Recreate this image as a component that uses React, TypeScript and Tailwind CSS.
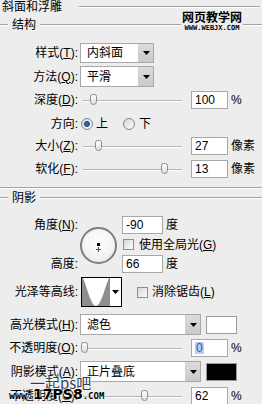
import type { ReactNode } from 'react'

const font = "font-['Liberation_Sans','Noto_Sans_CJK_SC',sans-serif]"

function Label({ children }: { children: ReactNode }) {
  return <div className="w-[78px] shrink-0 text-right whitespace-nowrap leading-[14px]">{children}</div>
}

function Arrow() {
  return (
    <svg width="7" height="4" viewBox="0 0 7 4">
      <path d="M0 0H7L3.5 4Z" fill="#000" />
    </svg>
  )
}

function Select({ value, width }: { value: string; width: string }) {
  return (
    <div className={`${width} h-full ml-[2px] flex bg-white border border-[#a8a8a8]`}>
      <div className="flex-1 pl-[6px] flex items-center whitespace-nowrap overflow-hidden">{value}</div>
      <div className="w-[15px] flex items-center justify-center bg-gradient-to-b from-[#dcdcdc] to-[#c9c9c9] border-l border-[#d0d0d0]">
        <Arrow />
      </div>
    </div>
  )
}

function Field({ value, width = 'w-[37px]', selected = false }: { value: string; width?: string; selected?: boolean }) {
  return (
    <div className={`${width} h-[18px] bg-white border border-[#a8a8a8] flex items-center pl-[3px] leading-none`}>
      {selected ? <span className="bg-[#b6cff3] text-[#2556b8] px-px">{value}</span> : value}
    </div>
  )
}

function Slider({ thumb }: { thumb: number }) {
  return (
    <div className="relative w-[104px] h-[18px] ml-[2px] shrink-0">
      <div className="absolute left-[3px] right-[2px] top-[9px] border-t border-[#b4b4b4] border-b border-b-white" />
      <div
        className="absolute top-[3px] w-[7px] h-[11px] rounded-t-[3px] rounded-b-[4px] border border-[#8c8c8c] bg-gradient-to-b from-white to-[#dedede]"
        style={{ left: thumb - 3.5 }}
      />
    </div>
  )
}

function SliderRow({ label, thumb, value, unit, mt, selected }: { label: ReactNode; thumb: number; value: string; unit: string; mt: string; selected?: boolean }) {
  return (
    <div className={`flex items-center h-[18px] ${mt}`}>
      <Label>{label}</Label>
      <Slider thumb={thumb} />
      <div className="ml-[7px]">
        <Field value={value} selected={selected} />
      </div>
      <span className="ml-[3px] whitespace-nowrap">{unit}</span>
    </div>
  )
}

function Etched({ className = '' }: { className?: string }) {
  return <div className={`h-0 border-t border-[#a2a2a2] border-b border-b-white ${className}`} />
}

function Radio({ on }: { on: boolean }) {
  return (
    <div className="w-[12px] h-[12px] rounded-full border border-[#7d8894] bg-gradient-to-br from-[#d4d4d4] to-white flex items-center justify-center">
      {on && <div className="w-[6px] h-[6px] rounded-full bg-[#2f6ab0] border border-[#1b3f70]" />}
    </div>
  )
}

function Check() {
  return <div className="w-[11px] h-[11px] border border-[#8e8e8e] bg-gradient-to-br from-[#d6d6d6] to-white shrink-0" />
}

export default function App() {
  return (
    <div className={`relative w-[262px] h-[404px] overflow-hidden bg-[#ededed] text-[12px] text-black ${font}`}>
      {/* 外框标题 */}
      <div className="flex items-center h-[14px]">
        <span className="pl-[2px] leading-[14px] whitespace-nowrap">斜面和浮雕</span>
        <Etched className="ml-[17px] flex-1 mr-[2px]" />
      </div>

      {/* 结构 */}
      <div className="flex items-center h-[12px] mt-[5px]">
        <Etched className="w-[8px]" />
        <span className="px-[4px] leading-[12px]">结构</span>
        <Etched className="flex-1" />
      </div>

      <div className="flex items-center h-[20px] mt-[12px]">
        <Label>样式(<u>T</u>):</Label>
        <Select value="内斜面" width="w-[74px]" />
      </div>
      <div className="flex items-center h-[21px] mt-[3px]">
        <Label>方法(<u>Q</u>):</Label>
        <Select value="平滑" width="w-[74px]" />
      </div>

      <SliderRow label={<>深度(<u>D</u>):</>} thumb={13} value="100" unit="%" mt="mt-[4px]" />

      <div className="flex items-center h-[18px] mt-[6px]">
        <Label>方向:</Label>
        <div className="ml-[3px]"><Radio on /></div>
        <span className="ml-[3px]">上</span>
        <div className="ml-[15px]"><Radio on={false} /></div>
        <span className="ml-[4px]">下</span>
      </div>

      <SliderRow label={<>大小(<u>Z</u>):</>} thumb={18} value="27" unit="像素" mt="mt-[4px]" />
      <SliderRow label={<>软化(<u>F</u>):</>} thumb={84} value="13" unit="像素" mt="mt-[5px]" />

      <Etched className="mt-[9px]" />

      {/* 阴影 */}
      <div className="flex items-center h-[12px] mt-[3px]">
        <Etched className="w-[8px]" />
        <span className="px-[4px] leading-[12px]">阴影</span>
        <Etched className="flex-1" />
      </div>

      <div className="flex mt-[12px]">
        <div className="flex flex-col">
          <div className="h-[18px] flex items-center"><Label>角度(<u>N</u>):</Label></div>
          <div className="h-[21px]" />
          <div className="h-[18px] flex items-center"><Label>高度:</Label></div>
        </div>
        <div className="relative ml-[2px] mt-[11px] w-[37px] h-[37px] rounded-full border-2 border-[#7e7e7e] bg-[radial-gradient(circle_at_50%_40%,#ffffff_0%,#f3f3f3_60%,#d9d9d9_100%)]">
          <div className="absolute left-[15px] top-[14px] w-[3px] h-[3px] bg-black" />
          <div className="absolute left-[16px] top-[18px] w-px h-[5px] bg-[#555]" />
          <div className="absolute left-[14px] top-[20px] w-[5px] h-px bg-[#555]" />
        </div>
        <div className="ml-[5px] flex flex-col">
          <div className="h-[18px] flex items-center">
            <Field value="-90" width="w-[41px]" />
            <span className="ml-[3px]">度</span>
          </div>
          <div className="h-[21px] flex items-center">
            <div className="ml-px"><Check /></div>
            <span className="ml-[5px] whitespace-nowrap">使用全局光(<u>G</u>)</span>
          </div>
          <div className="h-[18px] flex items-center">
            <Field value="66" width="w-[41px]" />
            <span className="ml-[3px]">度</span>
          </div>
        </div>
      </div>

      <div className="flex items-center h-[30px] mt-[4px]">
        <Label>光泽等高线:</Label>
        <div className="ml-[3px] w-[41px] h-[30px] border border-black bg-white flex">
          <svg width="28" height="28" viewBox="0 0 28 28" className="block">
            <rect width="28" height="28" fill="#8e8e8e" />
            <path d="M1 0H27C23 9 19 28 14 28C9 28 5 9 1 0Z" fill="#fff" />
          </svg>
          <div className="flex-1 flex items-center justify-center">
            <Arrow />
          </div>
        </div>
        <div className="ml-[15px]"><Check /></div>
        <span className="ml-[4px] whitespace-nowrap">消除锯齿(<u>L</u>)</span>
      </div>

      <div className="flex items-center h-[21px] mt-[7px]">
        <Label>高光模式(<u>H</u>):</Label>
        <Select value="滤色" width="w-[121px]" />
        <div className="ml-[5px] w-[31px] h-[18px] bg-white border border-[#9a9a9a]" />
      </div>

      <SliderRow label={<>不透明度(<u>O</u>):</>} thumb={4} value="0" unit="%" mt="mt-[4px]" selected />

      <div className="flex items-center h-[21px] mt-[4px]">
        <Label>阴影模式(<u>A</u>):</Label>
        <Select value="正片叠底" width="w-[121px]" />
        <div className="ml-[5px] w-[31px] h-[18px] bg-black border border-[#9a9a9a]" />
      </div>

      <SliderRow label={<>不透明度(<u>C</u>):</>} thumb={64} value="62" unit="%" mt="mt-[5px]" />

      {/* 水印 */}
      <div className="absolute left-[181px] top-[9px] flex flex-col items-center bg-[#ededed] px-px">
        <span className="text-[12px] leading-[15px] font-bold font-['Noto_Sans_CJK_SC',sans-serif]">网页教学网</span>
        <span className="text-[7px] leading-[8px] font-bold font-['DejaVu_Sans_Mono',monospace]">WWW.WEBJX.COM</span>
      </div>
      <div className="absolute left-[30px] top-[374px] text-[15px] leading-[17px] text-[#34404e] font-['Noto_Sans_CJK_SC',sans-serif] [text-shadow:0_0_2px_#fff,0_0_2px_#fff]">
        一起ps吧
      </div>
      <div className="absolute left-[9px] top-[387px] flex items-end leading-none font-bold text-black [text-shadow:0_0_2px_#fff,0_0_2px_#fff]">
        <span className="text-[10px] font-['DejaVu_Sans_Mono',monospace]">www.</span>
        <span className="text-[14px] font-['DejaVu_Sans',sans-serif]">17PS8</span>
        <span className="text-[9px] font-['DejaVu_Sans_Mono',monospace]">.COM</span>
      </div>
    </div>
  )
}
